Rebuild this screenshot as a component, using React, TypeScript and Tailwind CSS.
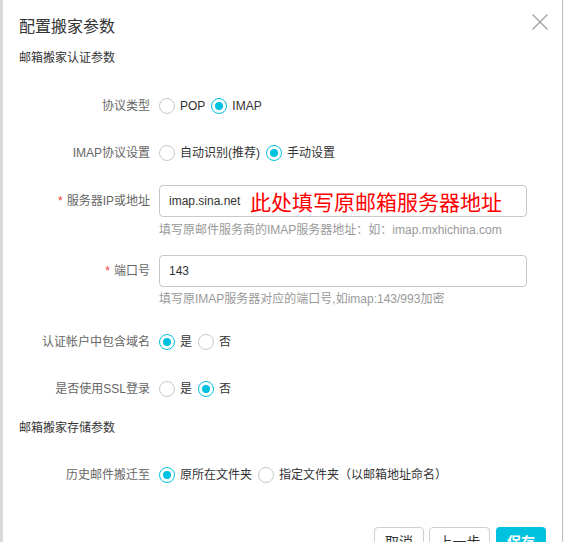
const FONT = { fontFamily: '"Liberation Sans", "Noto Sans CJK SC", sans-serif' };

function Radio({ checked }: { checked?: boolean }) {
  return (
    <span
      className={
        "flex size-[16px] shrink-0 items-center justify-center rounded-full border bg-white " +
        (checked ? "border-[#00c1de]" : "border-[#c8c8c8]")
      }
    >
      {checked && <span className="size-[8px] rounded-full bg-[#00c1de]" />}
    </span>
  );
}

function RadioGroup({ options, value }: { options: string[]; value: number }) {
  return (
    <div className="flex items-center gap-[6px]">
      {options.map((o, i) => (
        <label key={o} className="flex items-center gap-[5px] text-[12px] text-[#333]">
          <Radio checked={i === value} />
          <span>{o}</span>
        </label>
      ))}
    </div>
  );
}

function Row({
  label,
  required,
  className,
  children,
}: {
  label: string;
  required?: boolean;
  className?: string;
  children: React.ReactNode;
}) {
  return (
    <div className={"flex items-center " + (className ?? "")}>
      <div className="flex w-[140px] shrink-0 justify-end pr-[9px] text-[12px] text-[#666]">
        {required && <span className="mr-[4px] text-[#f04134]">*</span>}
        {label}
      </div>
      {children}
    </div>
  );
}

export default function App() {
  return (
    <div className="flex h-[542px] w-[563px] overflow-hidden bg-white" style={FONT}>
      <div className="w-[3px] shrink-0 bg-[#d9d9d9]" />
      <div className="flex flex-1 flex-col border-r border-[#bdbdbd] bg-white pl-[16px] pr-[15px] *:shrink-0">
        <div className="flex h-[48px] items-start justify-between">
          <h1 className="mt-[17px] text-[16px] leading-[20px] text-[#333]">配置搬家参数</h1>
          <svg className="mt-[14px] mr-[-1px] size-[16px]" viewBox="0 0 16 16" fill="none">
            <path d="M0.5 0.5L15.5 15.5M15.5 0.5L0.5 15.5" stroke="#a0a0a0" strokeWidth="1.3" />
          </svg>
        </div>

        <div className="flex h-[20px] items-center text-[12px] text-[#333]">邮箱搬家认证参数</div>

        <Row label="协议类型" className="mt-[23px] h-[30px]">
          <RadioGroup options={["POP", "IMAP"]} value={1} />
        </Row>

        <Row label="IMAP协议设置" className="mt-[17px] h-[30px]">
          <RadioGroup options={["自动识别(推荐)", "手动设置"]} value={1} />
        </Row>

        <Row label="服务器IP或地址" required className="mt-[17px] h-[32px]">
          <div className="relative flex h-[32px] w-[368px] items-center rounded-[4px] border border-[#c8c8c8] px-[9px] text-[12px] text-[#333]">
            imap.sina.net
            <span
              className="absolute left-[90px] top-[3px] text-[21px] leading-[24px] text-[#ff0000]"
              style={{ fontFamily: '"Noto Sans CJK SC", sans-serif' }}
            >
              此处填写原邮箱服务器地址
            </span>
          </div>
        </Row>
        <div className="mt-[5px] pl-[140px] text-[12px] leading-[16px] text-[#999]">
          填写原邮件服务商的IMAP服务器地址：如：imap.mxhichina.com
        </div>

        <Row label="端口号" required className="mt-[17px] h-[32px]">
          <div className="flex h-[32px] w-[368px] items-center rounded-[4px] border border-[#c8c8c8] px-[9px] text-[12px] text-[#333]">
            143
          </div>
        </Row>
        <div className="mt-[4px] pl-[140px] text-[12px] leading-[16px] text-[#999]">
          填写原IMAP服务器对应的端口号,如imap:143/993加密
        </div>

        <Row label="认证帐户中包含域名" className="mt-[20px] h-[30px]">
          <RadioGroup options={["是", "否"]} value={0} />
        </Row>

        <Row label="是否使用SSL登录" className="mt-[17px] h-[30px]">
          <RadioGroup options={["是", "否"]} value={1} />
        </Row>

        <div className="mt-[14px] flex h-[20px] items-center text-[12px] text-[#333]">邮箱搬家存储参数</div>

        <Row label="历史邮件搬迁至" className="mt-[22px] h-[30px]">
          <RadioGroup options={["原所在文件夹", "指定文件夹（以邮箱地址命名）"]} value={0} />
        </Row>

        <div className="mt-[37px] flex justify-end gap-[5px] pr-[1px]">
          <button className="h-[30px] w-[50px] rounded-[4px] border border-[#d0d0d0] bg-white text-[14px] text-[#333]">
            取消
          </button>
          <button className="h-[30px] w-[61px] rounded-[4px] border border-[#d0d0d0] bg-white text-[14px] text-[#333]">
            上一步
          </button>
          <button className="ml-[1px] h-[30px] w-[50px] rounded-[4px] bg-[#00c1de] text-[14px] font-bold text-white">
            保存
          </button>
        </div>
      </div>
    </div>
  );
}
